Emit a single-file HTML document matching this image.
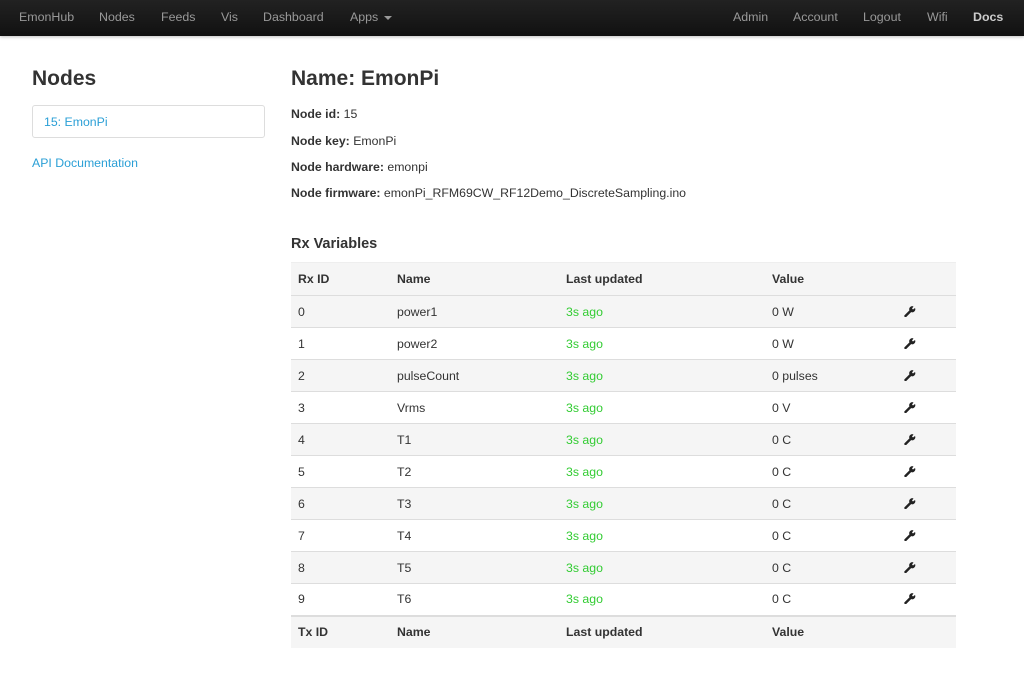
<!DOCTYPE html>
<html><head><meta charset="utf-8"><style>
*{box-sizing:border-box;margin:0;padding:0}
body{width:1024px;height:681px;overflow:hidden;background:#fff;font-family:"Liberation Sans",sans-serif;font-size:12.3px;color:#333;position:relative}
.nav{position:absolute;left:0;top:0;width:1024px;height:36px;background:linear-gradient(#222,#111);box-shadow:0 1px 3px rgba(0,0,0,.25)}
.nav a{position:absolute;top:10px;color:#999;font-size:12.4px;text-decoration:none}
h1{position:absolute;font-size:21px;font-weight:bold;color:#333}
.box{position:absolute;left:32px;top:105px;width:233px;height:33px;border:1px solid #ddd;border-radius:3px;padding:9px 0 0 11px;color:#2a9fd6}
.link{position:absolute;left:32px;top:156px;color:#2a9fd6}
.p{position:absolute;left:291px}
.p b{font-weight:bold}
table{position:absolute;left:291px;top:262px;width:665px;border-collapse:collapse;font-size:12.3px}
td,th{height:32px;padding:0 0 0 7px;text-align:left;border-top:1px solid #ddd;vertical-align:middle}
th{font-weight:bold}
tr.g td,tr.g th{background:#f5f5f5}
thead th{border-top:1px solid #eee;border-bottom:1px solid #ddd;height:33px}
.gr{color:#3c3}
.w{width:12px;height:12px;display:block;margin-left:8px;margin-top:-2px}
.caret{display:inline-block;width:0;height:0;border-left:4px solid transparent;border-right:4px solid transparent;border-top:4px solid #999;vertical-align:middle;margin-left:2px}
</style></head><body>
<div class="nav">
<a style="left:19px">EmonHub</a><a style="left:99px">Nodes</a><a style="left:161px">Feeds</a><a style="left:221px">Vis</a><a style="left:263px">Dashboard</a><a style="left:350px">Apps <span class="caret"></span></a>
<a style="left:733px">Admin</a><a style="left:793px">Account</a><a style="left:863px">Logout</a><a style="left:927px">Wifi</a><a style="left:973px;color:#ccc;font-weight:bold">Docs</a>
</div>
<h1 style="left:32px;top:67px">Nodes</h1>
<div class="box">15: EmonPi</div>
<div class="link">API Documentation</div>
<h1 style="left:291px;top:67px">Name: EmonPi</h1>
<div class="p" style="top:107px"><b>Node id:</b> 15</div>
<div class="p" style="top:134px"><b>Node key:</b> EmonPi</div>
<div class="p" style="top:160px"><b>Node hardware:</b> emonpi</div>
<div class="p" style="top:186px"><b>Node firmware:</b> emonPi_RFM69CW_RF12Demo_DiscreteSampling.ino</div>
<div class="p" style="top:236px;font-size:14.5px;font-weight:bold">Rx Variables</div>
<table>
<colgroup><col style="width:99px"><col style="width:169px"><col style="width:206px"><col style="width:124px"><col></colgroup>
<thead><tr class="g"><th>Rx ID</th><th>Name</th><th>Last updated</th><th>Value</th><th></th></tr></thead>
<tbody id="tb">
<tr class="g"><td>0</td><td>power1</td><td class="gr">3s ago</td><td>0 W</td><td>W</td></tr>
<tr><td>1</td><td>power2</td><td class="gr">3s ago</td><td>0 W</td><td>W</td></tr>
<tr class="g"><td>2</td><td>pulseCount</td><td class="gr">3s ago</td><td>0 pulses</td><td>W</td></tr>
<tr><td>3</td><td>Vrms</td><td class="gr">3s ago</td><td>0 V</td><td>W</td></tr>
<tr class="g"><td>4</td><td>T1</td><td class="gr">3s ago</td><td>0 C</td><td>W</td></tr>
<tr><td>5</td><td>T2</td><td class="gr">3s ago</td><td>0 C</td><td>W</td></tr>
<tr class="g"><td>6</td><td>T3</td><td class="gr">3s ago</td><td>0 C</td><td>W</td></tr>
<tr><td>7</td><td>T4</td><td class="gr">3s ago</td><td>0 C</td><td>W</td></tr>
<tr class="g"><td>8</td><td>T5</td><td class="gr">3s ago</td><td>0 C</td><td>W</td></tr>
<tr><td>9</td><td>T6</td><td class="gr">3s ago</td><td>0 C</td><td>W</td></tr>
<tr class="g"><th style="border-top:2px solid #ddd">Tx ID</th><th style="border-top:2px solid #ddd">Name</th><th style="border-top:2px solid #ddd">Last updated</th><th style="border-top:2px solid #ddd">Value</th><th style="border-top:2px solid #ddd"></th></tr>
</tbody></table>
<script>
document.querySelectorAll('#tb td:last-child').forEach(function(t){if(t.textContent==='W')t.innerHTML='<svg class="w" viewBox="0 0 12 12"><path d="M1.5 11 L6.5 6" stroke="#222" stroke-width="2.4" stroke-linecap="round"/><path d="M5.5 5.5 A3 3 0 0 1 9.5 1.5 L8 3.5 L9 4.5 L11 3 A3 3 0 0 1 7 7 Z" fill="#222"/></svg>';});
</script>
</body></html>
